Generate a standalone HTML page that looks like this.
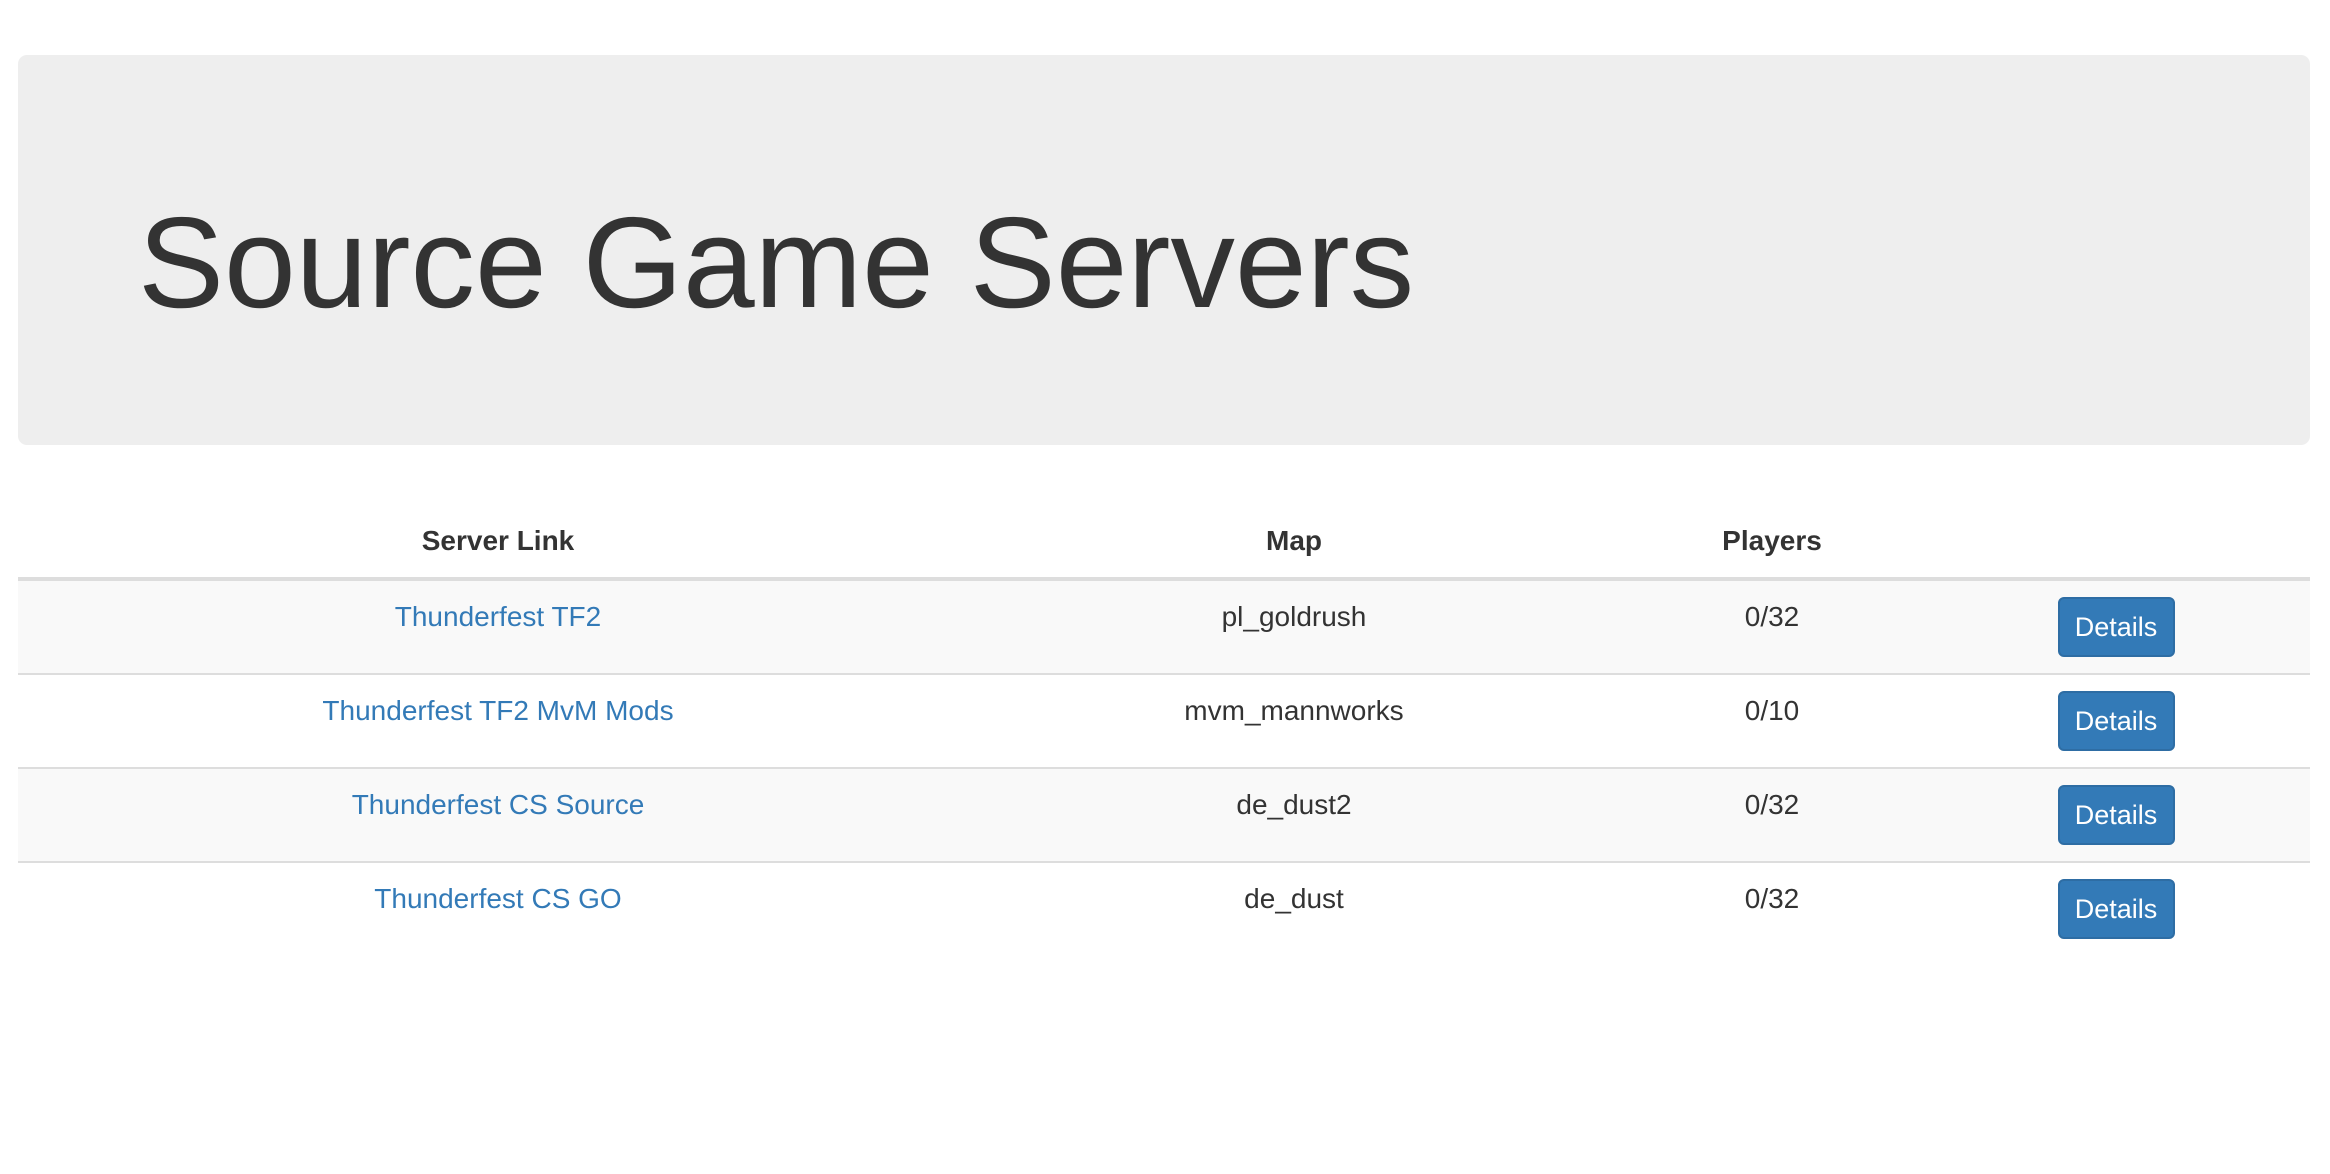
<!DOCTYPE html>
<html><head><meta charset="utf-8"><style>
html,body{margin:0;padding:0;background:#fff;width:2330px;height:1174px;overflow:hidden}
body{font-family:"Liberation Sans",Helvetica,Arial,sans-serif;color:#333;font-size:28px}
.jumbo{position:absolute;left:18px;top:55px;width:2292px;height:390px;background:#eee;border-radius:9px}
.jumbo h1{position:absolute;left:120px;top:128px;margin:0;font-size:129px;font-weight:normal;line-height:160px;white-space:nowrap;color:#333}
table{position:absolute;left:18px;top:505px;width:2292px;border-collapse:collapse;table-layout:fixed}
th,td{text-align:center;padding:16px;line-height:40px;vertical-align:top}
th{font-weight:bold;border-bottom:4px solid #ddd}
td{border-top:2px solid #ddd}
tbody tr:first-child td{border-top:none}
tbody tr:nth-child(odd){background:#f9f9f9}
a{color:#337ab7;text-decoration:none}
.btn{display:inline-block;width:117px;height:60px;box-sizing:border-box;background:#337ab7;border:2px solid #2e6da4;border-radius:6px;color:#fff;font-size:27px;line-height:56px;text-align:center}
td.b{padding-top:16px;padding-bottom:16px;padding-left:0;padding-right:12px}
</style></head><body>
<div class="jumbo"><h1>Source Game Servers</h1></div>
<table>
<colgroup><col style="width:960px"><col style="width:632px"><col style="width:324px"><col style="width:376px"></colgroup>
<thead><tr><th>Server Link</th><th>Map</th><th>Players</th><th></th></tr></thead>
<tbody>
<tr><td><a>Thunderfest TF2</a></td><td>pl_goldrush</td><td>0/32</td><td class="b"><span class="btn">Details</span></td></tr>
<tr><td><a>Thunderfest TF2 MvM Mods</a></td><td>mvm_mannworks</td><td>0/10</td><td class="b"><span class="btn">Details</span></td></tr>
<tr><td><a>Thunderfest CS Source</a></td><td>de_dust2</td><td>0/32</td><td class="b"><span class="btn">Details</span></td></tr>
<tr><td><a>Thunderfest CS GO</a></td><td>de_dust</td><td>0/32</td><td class="b"><span class="btn">Details</span></td></tr>
</tbody></table>
</body></html>
